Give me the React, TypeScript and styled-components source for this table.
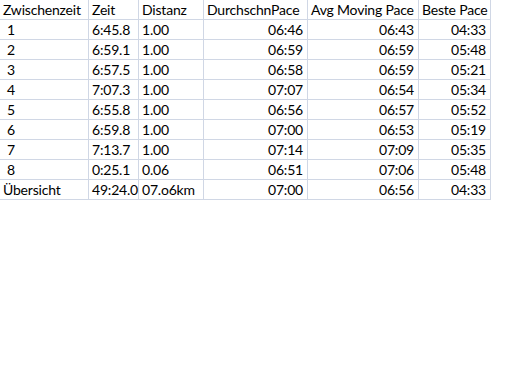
import React from "react";
import styled, { createGlobalStyle } from "styled-components";

const Global = createGlobalStyle`
  html, body { margin: 0; padding: 0; background: #ffffff; }
  body { font-family: Lato, "Open Sans", "Liberation Sans", sans-serif; }
`;

const Sheet = styled.div`
  display: grid;
  grid-template-columns: 89px 50px 65px 104px 111px 72px;
  grid-auto-rows: 20px;
  width: max-content;
`;

const Cell = styled.div<{ $right?: boolean; $indent?: boolean }>`
  box-sizing: border-box;
  border-right: 1px solid #d0d7e5;
  border-bottom: 1px solid #d0d7e5;
  font-size: 14px;
  letter-spacing: -0.2px;
  line-height: 20px;
  color: #000;
  white-space: nowrap;
  overflow: visible;
  text-align: ${(p) => (p.$right ? "right" : "left")};
  padding: ${(p) => (p.$right ? "0 4px 0 0" : p.$indent ? "0 0 0 7px" : "0 0 0 3px")};
`;

const headers = ["Zwischenzeit", "Zeit", "Distanz", "DurchschnPace", "Avg Moving Pace", "Beste Pace"];

const rows: string[][] = [
  ["1", "6:45.8", "1.00", "06:46", "06:43", "04:33"],
  ["2", "6:59.1", "1.00", "06:59", "06:59", "05:48"],
  ["3", "6:57.5", "1.00", "06:58", "06:59", "05:21"],
  ["4", "7:07.3", "1.00", "07:07", "06:54", "05:34"],
  ["5", "6:55.8", "1.00", "06:56", "06:57", "05:52"],
  ["6", "6:59.8", "1.00", "07:00", "06:53", "05:19"],
  ["7", "7:13.7", "1.00", "07:14", "07:09", "05:35"],
  ["8", "0:25.1", "0.06", "06:51", "07:06", "05:48"],
  ["Übersicht", "49:24.0", "07.o6km", "07:00", "06:56", "04:33"],
];

export default function App() {
  return (
    <>
      <Global />
      <Sheet>
        {headers.map((h) => (
          <Cell key={h}>{h}</Cell>
        ))}
        {rows.map((r, i) =>
          r.map((v, j) => (
            <Cell
              key={`${i}-${j}`}
              $right={j >= 3}
              $indent={j === 0 && i < 8}
            >
              {v}
            </Cell>
          ))
        )}
      </Sheet>
    </>
  );
}
